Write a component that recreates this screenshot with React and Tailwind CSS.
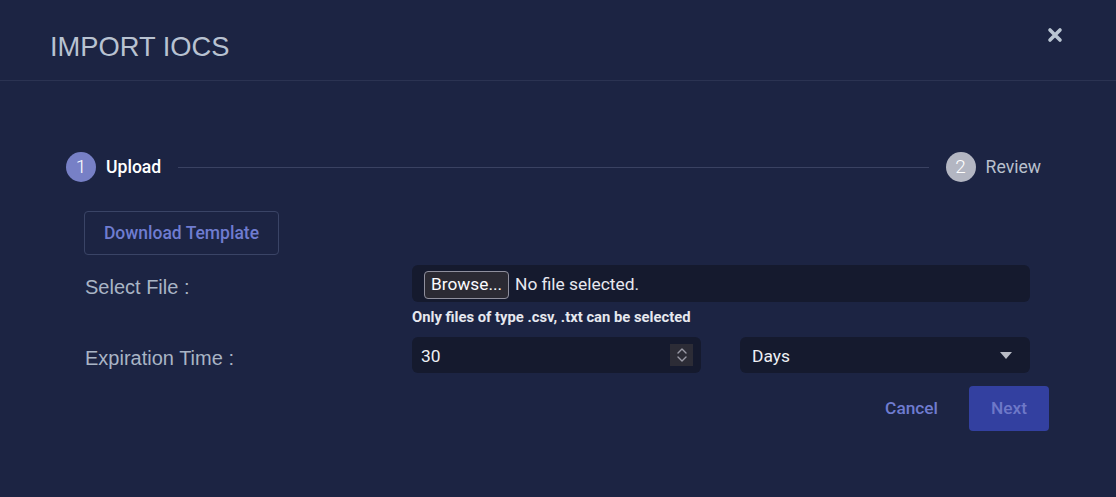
import React from "react";

export default function App() {
  return (
    <div className="w-[1116px] h-[497px] bg-[#1c2443] overflow-hidden" style={{ fontFamily: "Roboto, 'Liberation Sans', sans-serif" }}>
      {/* Header */}
      <div className="relative h-[81px] border-b border-[#2b3352]">
        <div className="pl-[50px] pt-[31px] text-[27.3px] leading-[32px] text-[#b8c2d1] font-['Liberation_Sans',Arial,sans-serif]">
          IMPORT IOCS
        </div>
        <button className="absolute left-[1045px] top-[25px] w-[19px] h-[19px] flex items-center justify-center">
          <svg width="16" height="16" viewBox="0 0 16 16">
            <path d="M3 3 L13 13 M13 3 L3 13" stroke="#b9c5d2" strokeWidth="3.6" strokeLinecap="round" />
          </svg>
        </button>
      </div>

      {/* Stepper */}
      <div className="flex items-center pl-[66px] pr-[75px] mt-[71px] h-[30px]">
        <div className="w-[30px] h-[30px] rounded-full bg-[#7780c6] flex items-center justify-center text-white text-[19px] font-light">1</div>
        <div className="ml-[10px] text-white text-[17.6px] font-medium">Upload</div>
        <div className="flex-1 h-px bg-[#3a4262] mx-[17px]" />
        <div className="w-[30px] h-[30px] rounded-full bg-[#b3b6c2] flex items-center justify-center text-white text-[19px] font-light">2</div>
        <div className="ml-[10px] text-[#b9c0cd] text-[17.6px]">Review</div>
      </div>

      {/* Content */}
      <div className="pl-[84px] w-[1049px]">
        <button className="mt-[29px] h-[44px] w-[195px] rounded-[4px] border border-[#3a4466] text-[#6f7cd0] text-[17.5px] font-medium">
          Download Template
        </button>

        <div className="flex items-start mt-[10px]">
          <div className="w-[328px] pt-[9px] pl-px text-[20px] text-[#a9b4c5] font-['Liberation_Sans',Arial,sans-serif] leading-[26px]">Select File :</div>
          <div className="flex flex-col">
            <div className="w-[618px] h-[37px] rounded-[6px] bg-[#151a2e] flex items-center pl-[12px] pt-[2px]">
              <span className="h-[28px] px-[6px] rounded-[4px] border border-[#8f8f9d] bg-[#2b2a33] text-[#fbfbfe] text-[17.3px] flex items-center">Browse...</span>
              <span className="ml-[6px] text-[#e8e8ee] text-[17.4px]">No file selected.</span>
            </div>
            <div className="mt-[6px] text-[14.8px] font-bold text-[#e6e8ef] leading-[18px]">Only files of type .csv, .txt can be selected</div>
          </div>
        </div>

        <div className="flex items-center mt-[11px]">
          <div className="w-[328px] pl-px pt-[6px] text-[20px] text-[#a9b4c5] font-['Liberation_Sans',Arial,sans-serif]">Expiration Time :</div>
          <div className="w-[289px] h-[36px] rounded-[6px] bg-[#151a2e] flex items-center pl-[9px] pr-[8px]">
            <span className="flex-1 text-[#eef0f5] text-[17.4px] pt-[2px]">30</span>
            <span className="w-[23px] h-[22px] bg-[#2c2c36] flex items-center justify-center">
              <svg width="12" height="18" viewBox="0 0 12 18">
                <path d="M2 7 L6 3 L10 7 M2 11 L6 15 L10 11" stroke="#9a9aa6" strokeWidth="1.4" fill="none" strokeLinecap="round" strokeLinejoin="round" />
              </svg>
            </span>
          </div>
          <div className="ml-[39px] w-[290px] h-[36px] rounded-[6px] bg-[#151a2e] flex items-center pl-[12px] pr-[18px]">
            <span className="flex-1 text-[#eef0f5] text-[17.4px] pt-[2px]">Days</span>
            <svg width="12" height="7" viewBox="0 0 12 7">
              <path d="M0 0 L12 0 L6 7 Z" fill="#b9bcc6" />
            </svg>
          </div>
        </div>

        <div className="flex justify-end items-center mt-[13px]">
          <button className="text-[#6f7cd0] text-[17.3px] font-medium mr-[31px]">Cancel</button>
          <button className="w-[80px] h-[45px] rounded-[4px] bg-[#3340a0] text-[#6e78c8] text-[17.3px] font-medium">Next</button>
        </div>
      </div>
    </div>
  );
}
